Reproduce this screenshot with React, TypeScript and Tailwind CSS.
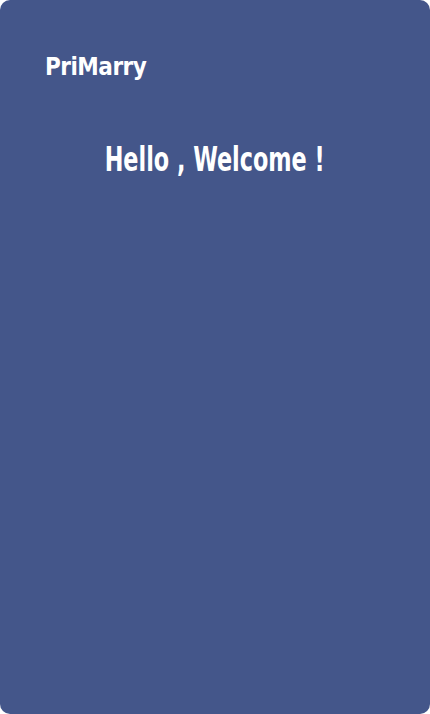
export default function App() {
  return (
    <div className="h-[714px] w-[430px] bg-white">
      <div
        className="flex h-full w-full flex-col rounded-[10px] bg-[#44568a] text-white"
        style={{ fontFamily: '"DejaVu Sans Condensed", "DejaVu Sans", sans-serif' }}
      >
        {/* Logo */}
        <div className="pl-[45px] pt-[55px] text-[24px] font-bold leading-[24px] tracking-[-0.5px]">
          PriMarry
        </div>

        {/* Greeting */}
        <h1 className="mt-[63px] text-center text-[34px] font-bold leading-[34px]">
          <span className="inline-block scale-x-[0.73]">Hello , Welcome !</span>
        </h1>
      </div>
    </div>
  )
}
